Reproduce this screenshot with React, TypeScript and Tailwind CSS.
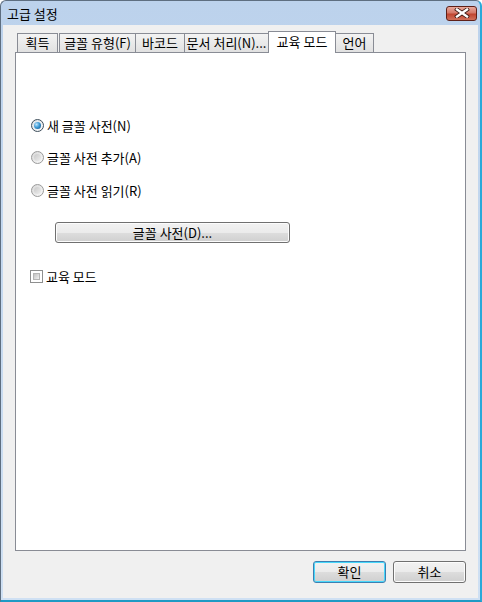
import React from "react";

const font = { fontFamily: '"Noto Sans CJK KR", "Liberation Sans", sans-serif' };

function Tab({ label, w, active, ml }: { label: string; w: string; active?: boolean; ml: string }) {
  if (active) {
    return (
      <div
        className={`${w} ${ml} h-[22px] -mb-px relative z-10 flex items-center justify-center bg-white border border-b-0 border-[#898c95] text-[13px] text-black pb-[2px]`}
      >
        {label}
      </div>
    );
  }
  return (
    <div
      className={`${w} ${ml} h-[19px] flex items-center justify-center bg-gradient-to-b from-[#f3f3f3] to-[#e1e1e1] border border-b-0 border-[#898c95] text-[13px] text-black`}
    >
      {label}
    </div>
  );
}

function Radio({ checked, label }: { checked?: boolean; label: string }) {
  return (
    <div className="flex items-center h-[13px]">
      <div
        className={`w-[13px] h-[13px] rounded-full border flex items-center justify-center ${
          checked ? "border-[#3f4f5c] bg-gradient-to-br from-[#dfe3e6] to-[#f7f8f9]" : "border-[#9a9a9a] bg-gradient-to-br from-[#d8d8d8] to-[#fafafa]"
        }`}
      >
        {checked ? (
          <div className="w-[7px] h-[7px] rounded-full bg-[radial-gradient(circle_at_35%_35%,#bfe4fb_0%,#3f9cd6_45%,#0d4d86_100%)]" />
        ) : (
          <div className="w-[7px] h-[7px] rounded-full bg-gradient-to-br from-[#c9c9c9] to-[#eeeeee]" />
        )}
      </div>
      <span className="ml-[3px] text-[13px] text-black leading-none">{label}</span>
    </div>
  );
}

function Button({ label, w, isDefault }: { label: string; w: string; isDefault?: boolean }) {
  return (
    <div
      className={`${w} h-[22px] rounded-[3px] border flex items-center justify-center text-[13px] text-black ${
        isDefault
          ? "border-[#3c7fb1] shadow-[inset_0_0_0_1px_#48d8fb]"
          : "border-[#707070] shadow-[inset_0_0_0_1px_#fcfcfc]"
      } bg-[linear-gradient(to_bottom,#f2f2f2_0%,#ebebeb_50%,#dddddd_51%,#cfcfcf_100%)]`}
    >
      {label}
    </div>
  );
}

export default function App() {
  return (
    <div className="w-[482px] h-[602px] bg-white" style={font}>
      <div className="w-[482px] h-[602px] flex flex-col rounded-t-[6px] overflow-hidden border-l border-t border-l-[#5e6e80] border-t-[#5e6e80] border-r-2 border-b-2 border-r-[#2aa9d9] border-b-[#1f9ac4] bg-gradient-to-b from-[#bcd2ec] to-[#cfe0f3]">
        {/* title bar */}
        <div className="h-[24px] flex items-center justify-between pl-[6px] pr-[3px]">
          <span className="text-[13px] text-black leading-none">고급 설정</span>
          <div className="w-[31px] h-[15px] rounded-[3px] border border-[#5f2018] bg-[linear-gradient(to_bottom,#e9a99c_0%,#d47868_45%,#c04530_55%,#d0705a_100%)] flex items-center justify-center">
            <svg width="16" height="10" viewBox="0 0 16 10">
              <path d="M3 1.5 L13 8.5 M13 1.5 L3 8.5" stroke="#3a1a14" strokeWidth="4" strokeLinecap="square" />
              <path d="M3 1.5 L13 8.5 M13 1.5 L3 8.5" stroke="#ffffff" strokeWidth="2.4" strokeLinecap="square" />
            </svg>
          </div>
        </div>

        {/* client */}
        <div className="flex-1 ml-[2px] mr-[2px] mb-[2px] bg-[#f0f0f0] flex flex-col pt-[6px] px-[12px]">
          <div className="flex items-end h-[21px] pl-[2px]">
            <Tab label="획득" w="w-[41px]" ml="ml-0" />
            <Tab label="글꼴 유형(F)" w="w-[77px]" ml="ml-[1px]" />
            <Tab label="바코드" w="w-[50px]" ml="-ml-px" />
            <Tab label="문서 처리(N)..." w="w-[85px]" ml="-ml-px" />
            <Tab label="교육 모드" w="w-[68px]" ml="-ml-px" active />
            <Tab label="언어" w="w-[39px]" ml="-ml-px" />
          </div>

          <div className="h-[499px] bg-white border border-[#898c95] flex flex-col pl-[15px] pt-[66px]">
            <Radio checked label="새 글꼴 사전(N)" />
            <div className="mt-[19px]">
              <Radio label="글꼴 사전 추가(A)" />
            </div>
            <div className="mt-[20px]">
              <Radio label="글꼴 사전 읽기(R)" />
            </div>
            <div className="mt-[25px] ml-[24px]">
              <div className="w-[235px] h-[21px] rounded-[3px] border border-[#707070] shadow-[inset_0_0_0_1px_#fcfcfc] bg-[linear-gradient(to_bottom,#f2f2f2_0%,#ebebeb_50%,#dddddd_51%,#cfcfcf_100%)] flex items-center justify-center text-[13px] text-black">
                글꼴 사전(D)...
              </div>
            </div>
            <div className="mt-[27px] -ml-px flex items-center h-[13px]">
              <div className="w-[13px] h-[13px] border border-[#8e8f8f] bg-white p-[2px]">
                <div className="w-full h-full border border-[#b5b5b5] bg-gradient-to-br from-[#c2c2c2] to-[#f0f0f0]" />
              </div>
              <span className="ml-[3px] text-[13px] text-black leading-none">교육 모드</span>
            </div>
          </div>

          <div className="flex justify-end gap-[7px] mt-[10px]">
            <Button label="확인" w="w-[73px]" isDefault />
            <Button label="취소" w="w-[73px]" />
          </div>
        </div>
      </div>
    </div>
  );
}
